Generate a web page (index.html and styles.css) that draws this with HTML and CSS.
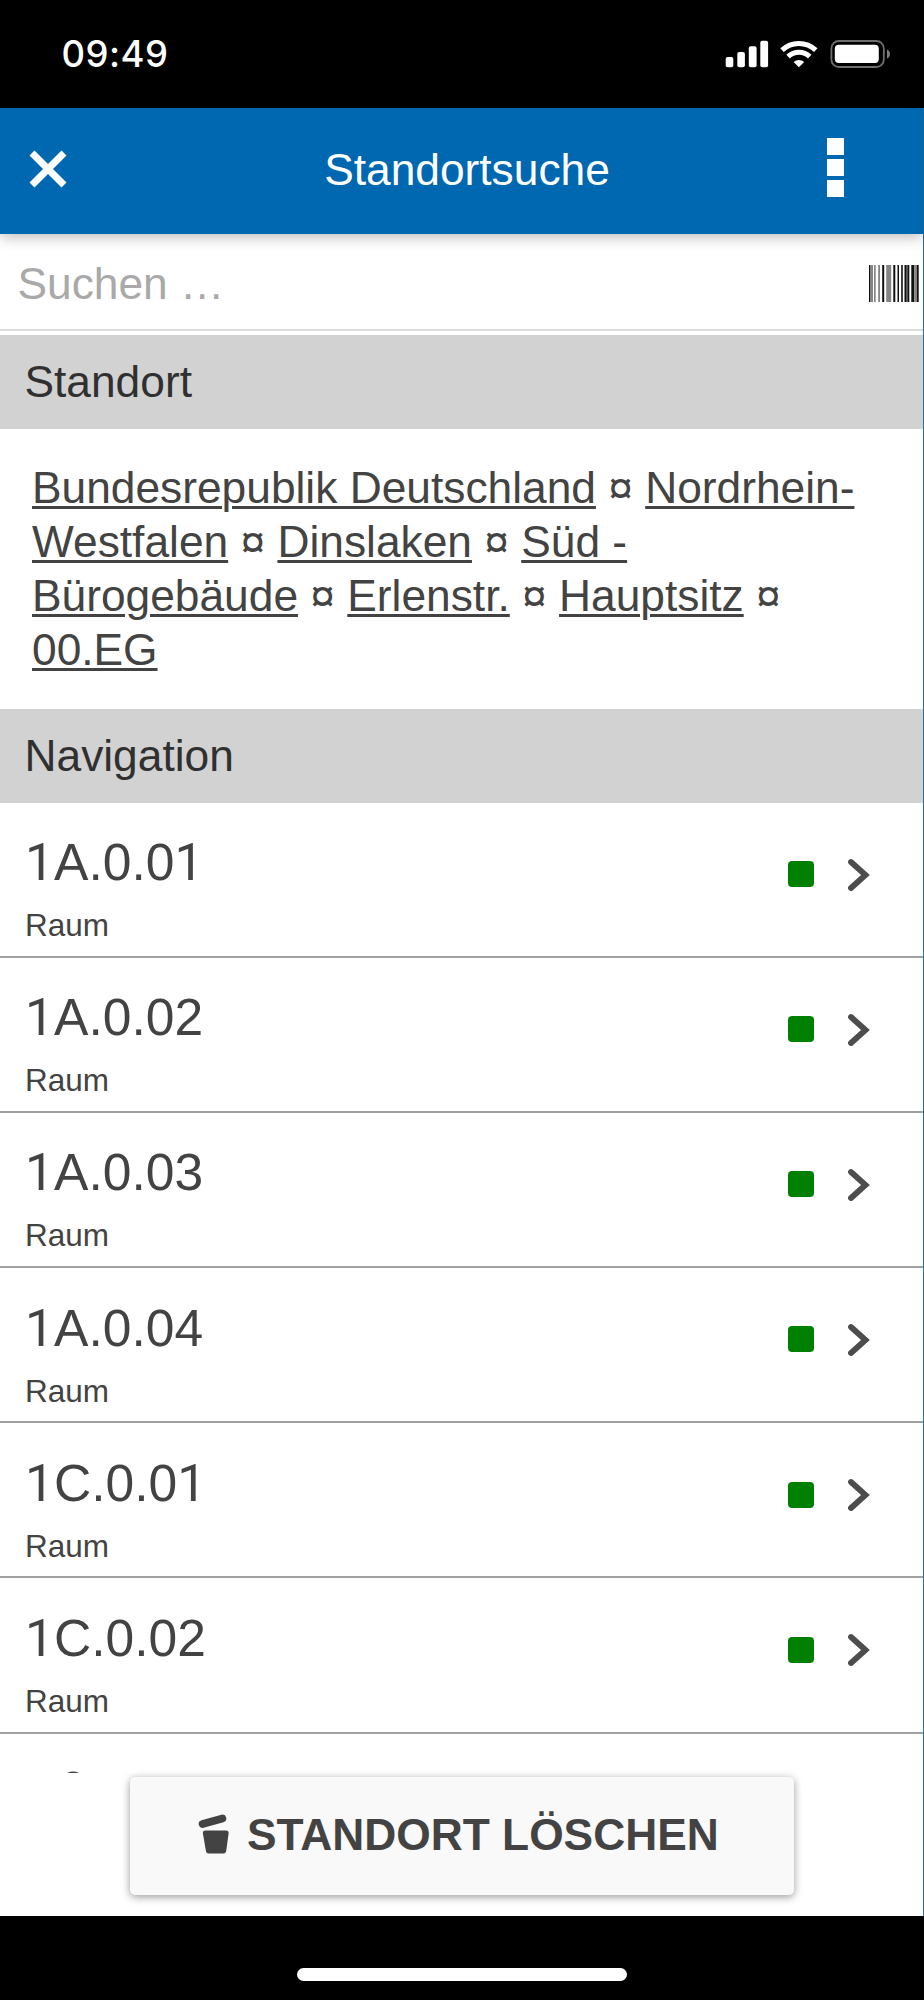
FILE: index.html
```html
<!DOCTYPE html>
<html lang="de">
<head>
<meta charset="utf-8">
<title>Standortsuche</title>
<link rel="stylesheet" href="styles.css">
</head>
<body>
<div class="status">
  <span class="time">09:49</span>
  <svg class="status-icons" width="166" height="30" viewBox="0 0 166 30">
    <g fill="#fff">
      <rect x="0.7" y="17" width="7.6" height="10.2" rx="2"/>
      <rect x="12.3" y="12" width="7.6" height="15.2" rx="2"/>
      <rect x="23.8" y="6.3" width="7.8" height="20.9" rx="2"/>
      <rect x="35.3" y="0.8" width="7.8" height="26.4" rx="2"/>
      <path d="M73.9 27.2 68.6 22a8 8 0 0 1 10.6 0z"/>
    </g>
    <g fill="none" stroke="#fff" stroke-width="5">
      <path d="M57 10.1a24.7 24.7 0 0 1 33.8 0"/>
      <path d="M63.1 16.6a15.8 15.8 0 0 1 21.6 0"/>
    </g>
    <rect x="106.4" y="1" width="52.4" height="26" rx="7.5" fill="none" stroke="#6e6e6e" stroke-width="1.8"/>
    <rect x="109.8" y="4.7" width="44" height="18.3" rx="4" fill="#fff"/>
    <path d="M162 9.6c4 1.800 4 7.300 0 9z" fill="#7d7d7d"/>
  </svg>
</div>
<div class="app">
  <header class="header">
    <svg class="close" width="38" height="38" viewBox="0 0 38 38"><path d="M3 3 35 35M35 3 3 35" stroke="#fff" stroke-width="7" fill="none"/></svg>
    <h1 class="title">Standortsuche</h1>
    <div class="menu"><i></i><i></i><i></i></div>
  </header>
  <main class="content">
    <div class="search">
      <span class="placeholder">Suchen …</span>
      <svg class="barcode" width="50" height="37" viewBox="0 0 50 37">
        <path fill="#111" d="M0 0h1.500v37H0zM13.200 0h2v37h-2zM24.300 0h2v37h-2zM28.500 0h1.500v37h-1.500zM32.200 0h1.600v37h-1.600zM35.500 0h1.500v37h-1.500zM38.300 0h2v37h-2zM42.300 0h3v37h-3zM48 0h1.700v37H48z"/>
        <path fill="#858585" d="M1.500 0H4v37H1.500zM5 0h1.700v37H5zM9.200 0h1.800v37H9.200zM17.200 0h5v37h-5zM45.300 0H48v37h-2.700z"/>
        <path fill="#555" d="M37 0h1.300v37H37z"/>
      </svg>
    </div>
    <h2 class="section">Standort</h2>
    <p class="crumbs"><a>Bundesrepublik Deutschland</a> ¤ <a>Nordrhein-<br>Westfalen</a> ¤ <a>Dinslaken</a> ¤ <a>Süd -<br>Bürogebäude</a> ¤ <a>Erlenstr.</a> ¤ <a>Hauptsitz</a> ¤<br><a>00.EG</a></p>
    <h2 class="section">Navigation</h2>
    <div class="list">
      <div class="row"><div class="label"><div class="name"><span class="one">1</span>A.0.0<span class="one">1</span></div><div class="kind">Raum</div></div><i class="state"></i><svg class="chevron" width="24" height="34" viewBox="0 0 24 34"><path d="M4 4 18.500 17 4 30"/></svg></div>
      <div class="row"><div class="label"><div class="name"><span class="one">1</span>A.0.02</div><div class="kind">Raum</div></div><i class="state"></i><svg class="chevron" width="24" height="34" viewBox="0 0 24 34"><path d="M4 4 18.500 17 4 30"/></svg></div>
      <div class="row"><div class="label"><div class="name"><span class="one">1</span>A.0.03</div><div class="kind">Raum</div></div><i class="state"></i><svg class="chevron" width="24" height="34" viewBox="0 0 24 34"><path d="M4 4 18.500 17 4 30"/></svg></div>
      <div class="row"><div class="label"><div class="name"><span class="one">1</span>A.0.04</div><div class="kind">Raum</div></div><i class="state"></i><svg class="chevron" width="24" height="34" viewBox="0 0 24 34"><path d="M4 4 18.500 17 4 30"/></svg></div>
      <div class="row"><div class="label"><div class="name"><span class="one">1</span>C.0.0<span class="one">1</span></div><div class="kind">Raum</div></div><i class="state"></i><svg class="chevron" width="24" height="34" viewBox="0 0 24 34"><path d="M4 4 18.500 17 4 30"/></svg></div>
      <div class="row"><div class="label"><div class="name"><span class="one">1</span>C.0.02</div><div class="kind">Raum</div></div><i class="state"></i><svg class="chevron" width="24" height="34" viewBox="0 0 24 34"><path d="M4 4 18.500 17 4 30"/></svg></div>
      <div class="next"><svg width="14" height="2" viewBox="0 0 14 2"><path d="M1 2Q7-.8 13 2z" fill="#444"/></svg></div>
    </div>
  </main>
  <footer class="footer">
    <button class="delete">
      <svg width="32" height="40" viewBox="0 0 32 40">
        <path d="M4.500 10 24.500 4.500" stroke="#434343" stroke-width="7.600" stroke-linecap="round"/>
        <path d="M7.500 16.500h20.500q3 0 2.600 3l-2.400 17.500q-.4 2.500-2.900 2.500H10.800q-2.500 0-2.900-2.500L4.900 19.500q-.4-3 2.600-3z" fill="#434343"/>
      </svg>
      <span>STANDORT LÖSCHEN</span>
    </button>
  </footer>
</div>
<div class="home"><i></i></div>
</body>
</html>
```
FILE: styles.css
```css
* { box-sizing: border-box; }
body {
  margin: 0;
  width: 924px;
  height: 2000px;
  overflow: hidden;
  display: flex;
  flex-direction: column;
  background: #000;
  color: #434343;
  font-family: "Liberation Sans", Arial, sans-serif;
  font-size: 44.3px;
}
h1, h2, p { margin: 0; font-size: inherit; font-weight: 400; }
svg { display: block; flex: none; }

.status {
  height: 108px;
  flex: none;
  display: flex;
  justify-content: space-between;
  padding: 40px 33px 0 61.500px;
}
.time {
  color: #fff;
  font: 500 36.500px/29px Inter, sans-serif;
  letter-spacing: 0.5px;
}

.app {
  height: 1808px;
  flex: none;
  display: flex;
  flex-direction: column;
  background: #fff;
  border-right: 1px solid #236f9f;
}
.header {
  height: 126px;
  flex: none;
  display: grid;
  grid-template-columns: 100px 1fr 96px;
  align-items: center;
  background: #0067b1;
  color: #fff;
  box-shadow: 0 2px 14px rgba(0, 0, 0, .3);
  z-index: 1;
}
.close { margin: 0 0 5px 29px; }
.title { text-align: center; line-height: 60px; padding: 0 0 2px 7px; }
.menu { display: flex; flex-direction: column; gap: 4.300px; width: 17px; margin: 0 0 7px; }
.menu i { height: 17px; background: #fff; }

.content { flex: 1; min-height: 0; }
.search {
  height: 97px;
  display: flex;
  justify-content: space-between;
  padding: 0 4.500px 0 17.500px;
  border-bottom: 2px solid #dcdcdc;
  margin-bottom: 4px;
}
.placeholder { color: #a9a9a9; line-height: 99px; height: 94px; }
.barcode { margin-top: 30.500px; }
.section {
  height: 93.500px;
  line-height: 94px;
  padding-left: 24.500px;
  background: #d2d2d2;
  color: #303030;
}
.crumbs {
  height: 280.500px;
  padding: 32px 0 0 32px;
  line-height: 54.200px;
  white-space: nowrap;
}
.crumbs a {
  text-decoration: underline;
  text-decoration-thickness: 2.500px;
  text-underline-offset: 3px;
}

.row {
  height: 155.200px;
  display: flex;
  padding-left: 25px;
  border-bottom: 2px solid #a0a0a0;
}
.label { width: 763px; padding-top: 29.500px; }
.name { font-size: 51.600px; line-height: 60px; height: 60px; }
.one { font-family: Roboto, sans-serif; line-height: 1; }
.kind { margin-top: 13px; font-size: 31.500px; line-height: 40px; }
.state { width: 26px; height: 26px; margin-top: 58.300px; border-radius: 4px; background: #008000; }
.chevron { margin: 55px 0 0 33px; }
.chevron path {
  fill: none;
  stroke: #4d4d4d;
  stroke-width: 5.800;
  stroke-linecap: round;
}
.next { padding: 37.500px 0 0 66px; }

.footer { height: 143px; flex: none; padding: 4px 0 0 130px; }
.delete {
  display: flex;
  width: 664px;
  height: 118px;
  padding: 0 0 0 68px;
  gap: 17px;
  border: 0;
  border-radius: 5px;
  background: #f9f9f9;
  color: #434343;
  font: 700 44.300px/116px "Liberation Sans", Arial, sans-serif;
  box-shadow: 0 2px 9px rgba(0, 0, 0, .4);
}
.delete svg { margin-top: 37px; }

.home { padding: 52px 0 0 297px; }
.home i { display: block; width: 330px; height: 12.500px; border-radius: 7px; background: #fff; }
```
